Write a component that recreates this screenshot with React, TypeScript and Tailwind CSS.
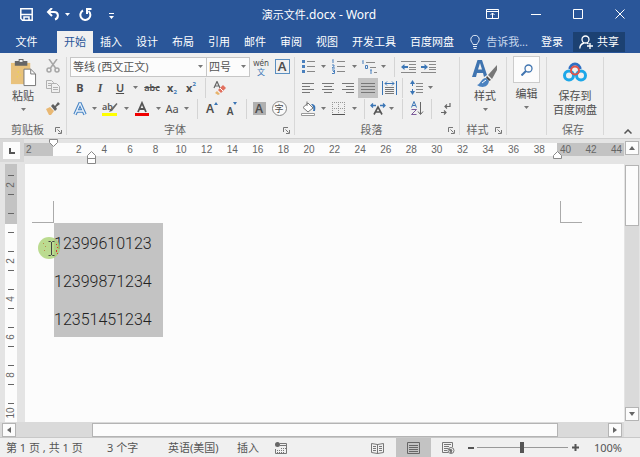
import React, { useState } from "react";
import clsx from "clsx";

const tabs = ["插入", "设计", "布局", "引用", "邮件", "审阅", "视图", "开发工具", "百度网盘"];
const rulerNumbers = [2, 4, 6, 8, 10, 12, 14, 16, 18, 20, 22, 24, 26, 28, 30, 32, 34, 36, 38];
const sideNumbers = ["", "2", "", "4", "", "6", "", "8", "", "10", ""];
const paragraphs = ["12399610123", "12399871234", "12351451234"];

const Caret = ({ className }: { className?: string }) => (
    <svg viewBox="0 0 5 3" className={clsx("h-[3px] w-[5px] shrink-0", className)}>
        <path d="M0 0h5L2.500 3z" fill="#777" />
    </svg>
);

type ToolProps = { label: string; className?: string; children?: React.ReactNode };

const Tool = ({ label, className = "w-5", children }: ToolProps) => (
    <button type="button" aria-label={label} className={clsx("flex h-5 shrink-0 items-center justify-center", className)}>
        {children}
    </button>
);

const More = ({ label, className = "w-2" }: ToolProps) => (
    <Tool label={label} className={className}>
        <Caret />
    </Tool>
);

const Divider = ({ className }: { className?: string }) => (
    <div className={clsx("h-5 w-px shrink-0 bg-[#d4d4d4]", className)} />
);

const Launcher = ({ label }: { label: string }) => (
    <button type="button" aria-label={label} className="shrink-0">
        <svg viewBox="0 0 7 7" className="size-[7px]" fill="none" stroke="#777">
            <path d="M.5 5V.5H5M2.500 2.500l3 3M6.500 3v3.500H3" />
        </svg>
    </button>
);

type GroupProps = { title?: string; launcher?: boolean; className?: string; children: React.ReactNode };

const Group = ({ title, launcher, className, children }: GroupProps) => (
    <section className={clsx("flex shrink-0 flex-col", className)}>
        <div className="h-[63px] shrink-0">{children}</div>
        <div className="flex h-[19px] shrink-0 items-center pt-[3px] pr-1">
            <span className="flex-1 text-center text-[#666]">{title}</span>
            {launcher && <Launcher label={`${title}设置`} />}
        </div>
    </section>
);

const GroupLine = () => <div className="mt-px h-[78px] w-px shrink-0 bg-[#d8d8d8]" />;

const Lines = ({ rows }: { rows: string }) => (
    <svg viewBox="0 0 14 12" className="h-3 w-[14px]" stroke="#777" fill="none">
        <path d={rows} />
    </svg>
);

const ClipboardGroup = () => (
    <Group title="剪贴板" launcher className="w-[66px]">
        <div className="flex">
            <button type="button" className="flex w-[46px] flex-col items-center pt-[3px]">
                <svg viewBox="0 0 28 30" className="h-[29px] w-[27px]">
                    <path d="M1 4h20v22H1z" fill="#e9c27c" />
                    <path d="M5 2h4V0h5v2h4v5H5z" fill="#666" />
                    <path d="M10 1h3v2h-3z" fill="#f0f0f0" />
                    <path d="M8 13h1v1H8zM10 16h1v1h-1zM7 18h1v1H7z" fill="#f5e618" />
                    <path d="M14.500 10.500h7l5 5v12h-12z" fill="#fff" stroke="#777" />
                    <path d="M21.500 10.500v5h5" fill="none" stroke="#777" />
                </svg>
                <span className="leading-4">粘贴</span>
                <Caret className="mt-1" />
            </button>
            <div className="flex flex-col">
                <Tool label="剪切" className="w-3.5">
                    <svg viewBox="0 0 14 14" className="size-3.5" fill="none" stroke="#a6a6a6" strokeWidth="1.500">
                        <path d="M3 0l6.500 9M11 0L4.500 9" />
                        <circle cx="3" cy="11" r="2" />
                        <circle cx="11" cy="11" r="2" />
                    </svg>
                </Tool>
                <Tool label="复制" className="w-3.5">
                    <svg viewBox="0 0 14 14" className="size-3.5" fill="#f0f0f0" stroke="#b0b0b0">
                        <path d="M.5 1.500h5l2 2v6h-7zM2 4.500h3M2 6.500h3" />
                        <path d="M5.500 4.500h5l3 3v6h-8zM7 8.500h5M7 10.500h5" />
                    </svg>
                </Tool>
                <Tool label="格式刷" className="mt-0.5 w-3.5">
                    <svg viewBox="0 0 14 13" className="h-[13px] w-3.5">
                        <path d="M0 7l4-2 4 4-3 4H3z" fill="#e9b873" />
                        <path d="M5 4l2-2 2 2 3-4 2 2-4 3 1 2-2 2z" fill="#5f5f5f" />
                    </svg>
                </Tool>
            </div>
        </div>
    </Group>
);

const FontGroup = () => (
    <Group title="字体" launcher className="w-[227px]">
        <div className="flex h-[21px] items-center pl-[3px]">
            <div className="relative">
                <select aria-label="字体" className="h-5 w-[137px] appearance-none border border-[#c6c6c6] bg-[#fcfcfc] pl-0.5 text-[11px] leading-4 text-[#555]">
                    <option>等线 (西文正文)</option>
                </select>
                <Caret className="pointer-events-none absolute top-2 right-1" />
            </div>
            <div className="relative -ml-px">
                <select aria-label="字号" className="h-5 w-11 appearance-none border border-[#c6c6c6] bg-[#fcfcfc] pl-0.5 text-[11px] leading-4 text-[#555]">
                    <option>四号</option>
                </select>
                <Caret className="pointer-events-none absolute top-2 right-1" />
            </div>
            <Tool label="拼音指南" className="w-[22px] flex-col">
                <span className="text-[8px] leading-[9px]">wén</span>
                <span className="text-[8px] leading-[9px] text-[#3a75b5]">文</span>
            </Tool>
            <Tool label="字符边框">
                <span className="flex size-[15px] items-center justify-center border border-[#5b8fc0] text-[13px] leading-none font-semibold">A</span>
            </Tool>
        </div>
        <div className="flex h-[21px] items-center pl-[3px] text-[11px]">
            <Tool label="加粗"><span className="font-bold">B</span></Tool>
            <Tool label="倾斜"><span className="font-['Liberation_Serif'] text-[12px] font-bold italic">I</span></Tool>
            <Tool label="下划线"><span className="font-semibold underline">U</span></Tool>
            <More label="下划线样式" className="w-[11px]" />
            <Tool label="删除线" className="w-[22px]"><span className="text-[9px] font-semibold line-through">abc</span></Tool>
            <Tool label="下标" className="w-[18px]">
                <span className="font-bold">x</span><span className="pt-2 text-[6px] font-bold text-[#3a75b5]">2</span>
            </Tool>
            <Tool label="上标">
                <span className="font-bold">x</span><span className="pb-2 text-[6px] font-bold text-[#3a75b5]">2</span>
            </Tool>
            <Divider className="mx-1" />
            <Tool label="清除格式">
                <svg viewBox="0 0 14 14" className="size-3.5">
                    <path d="M1 7l3-6.500L7 7M2 5h4" fill="none" stroke="#666" strokeWidth="1.200" />
                    <path d="M5 9l5-5 3 3-5 5z" fill="#e2705f" />
                    <path d="M4 10l3 3-2 1-3-2z" fill="#e7b36c" />
                    <path d="M7 7l3 3" stroke="#fff" />
                </svg>
            </Tool>
        </div>
        <div className="flex h-[21px] items-center pl-[3px]">
            <Tool label="文本效果">
                <svg viewBox="0 0 14 14" className="size-3.5" fill="none">
                    <path d="M2 12.500L7 1.500l5 11M4 9h6" stroke="#4a86c5" strokeWidth="3.500" />
                    <path d="M2 12.500L7 1.500l5 11M4 9h6" stroke="#e9f1fa" strokeWidth="1.300" />
                </svg>
            </Tool>
            <More label="更多文本效果" />
            <Tool label="突出显示" className="w-6">
                <svg viewBox="0 0 16 16" className="size-4">
                    <text x="0" y="9" fontSize="9" fontWeight="600" fill="#555">ab</text>
                    <path d="M14.500 2L8 9l-1 2 3-1 5.500-7z" fill="#666" />
                    <path d="M0 12h15v3H0z" fill="#ffff00" />
                </svg>
            </Tool>
            <More label="突出显示颜色" />
            <Tool label="字体颜色" className="w-6">
                <svg viewBox="0 0 14 16" className="h-4 w-3.5">
                    <path d="M3 11L7 2l4 9M4.500 8h5" fill="none" stroke="#555" strokeWidth="1.800" />
                    <path d="M0 12h14v3H0z" fill="#f00000" />
                </svg>
            </Tool>
            <More label="更多字体颜色" />
            <Tool label="更改大小写"><span className="text-[11px]">Aa</span></Tool>
            <More label="大小写选项" />
            <Divider className="mr-1 ml-[7px]" />
            <Tool label="增大字号">
                <span className="text-[12px] font-semibold">A</span>
                <svg viewBox="0 0 4 14" className="h-3.5 w-1"><path d="M0 3l2-3 2 3z" fill="#3a75b5" /></svg>
            </Tool>
            <Tool label="减小字号">
                <span className="pt-1 text-[10px] font-semibold">A</span>
                <svg viewBox="0 0 4 14" className="h-3.5 w-1"><path d="M0 0h4L2 3z" fill="#3a75b5" /></svg>
            </Tool>
            <Divider className="mr-0.5 ml-1" />
            <Tool label="字符底纹">
                <span className="flex size-[13px] items-center justify-center bg-[#b0b0b0] text-[12px] leading-none font-semibold">A</span>
            </Tool>
            <Tool label="带圈字符">
                <span className="flex size-[15px] items-center justify-center rounded-full border border-[#888] bg-[#fafafa] text-[9px] leading-none">字</span>
            </Tool>
        </div>
    </Group>
);

const ParagraphGroup = () => (
    <Group title="段落" launcher className="w-[164px]">
        <div className="flex h-[21px] items-center pl-0.5">
            <Tool label="项目符号" className="w-[22px]">
                <svg viewBox="0 0 13 13" className="size-[13px]">
                    <path d="M0 0h3v3H0zM0 5h3v3H0zM0 10h3v3H0z" fill="#4a80bd" />
                    <path d="M5 1.500h8M5 6.500h8M5 11.500h8" stroke="#888" />
                </svg>
            </Tool>
            <More label="项目符号库" />
            <Tool label="编号" className="w-[22px]">
                <svg viewBox="0 0 13 15" className="h-[15px] w-[13px]">
                    <path d="M0 1.500l1-1V4M0 6h2v1.500L0 9h3M0 11h2.500v3.500H0M1 12.500h1" fill="none" stroke="#4a80bd" />
                    <path d="M5 2.500h8M5 7.500h8M5 12.500h8" stroke="#888" />
                </svg>
            </Tool>
            <More label="编号库" className="w-2.5" />
            <Tool label="多级列表">
                <svg viewBox="0 0 15 14" className="h-3.5 w-[15px]">
                    <path d="M0 1.500l1-1V4M3.500 5.500h2v3h-2zM9 10v4M8 10h2" fill="none" stroke="#4a80bd" />
                    <path d="M4 2.500h9M8 7.500h6M12 12.500h3" stroke="#888" />
                </svg>
            </Tool>
            <More label="多级列表库" />
            <Divider className="mr-[3px] ml-[7px]" />
            <Tool label="减少缩进量">
                <svg viewBox="0 0 15 12" className="h-3 w-[15px]">
                    <path d="M0 .5h15M8 3.500h7M8 6.500h7M8 8.500h7M0 11.500h15" stroke="#888" />
                    <path d="M0 6l3.500-3v2H7v2H3.500v2z" fill="#3a75b5" />
                </svg>
            </Tool>
            <Tool label="增加缩进量">
                <svg viewBox="0 0 15 12" className="h-3 w-[15px]">
                    <path d="M0 .5h15M8 3.500h7M8 6.500h7M8 8.500h7M0 11.500h15" stroke="#888" />
                    <path d="M7 6L3.500 3v2H0v2h3.500v2z" fill="#3a75b5" />
                </svg>
            </Tool>
        </div>
        <div className="flex h-[21px] items-center pl-0.5">
            <Tool label="左对齐" className="w-[21px]"><Lines rows="M1 1.500h12M1 4.500h8M1 7.500h12M1 10.500h8" /></Tool>
            <Tool label="居中"><Lines rows="M1 1.500h12M3 4.500h8M1 7.500h12M3 10.500h8" /></Tool>
            <Tool label="右对齐"><Lines rows="M1 1.500h12M5 4.500h8M1 7.500h12M5 10.500h8" /></Tool>
            <Tool label="两端对齐" className="w-5 bg-[#c3c3c3]"><Lines rows="M0 1.500h14M0 4.500h14M0 7.500h14M0 10.500h14" /></Tool>
            <Tool label="分散对齐" className="w-[22px]">
                <svg viewBox="0 0 15 14" className="h-3.5 w-[15px]" fill="none">
                    <path d="M.5 0v14M14.500 0v14M3 2.500h9M5 .5l-2 2 2 2M10 .5l2 2-2 2" stroke="#3a75b5" />
                    <path d="M3 6.500h9M3 8.500h9M3 10.500h9M3 12.500h9" stroke="#777" />
                </svg>
            </Tool>
            <Divider className="mr-[3px] ml-0.5" />
            <Tool label="行距">
                <svg viewBox="0 0 13 15" className="h-[15px] w-[13px]">
                    <path d="M0 4l2.500-4L5 4H3v2H2V4zM0 11h2V9h1v2h2l-2.500 4z" fill="#3a75b5" />
                    <path d="M6 3.500h7M6 6.500h7M6 9.500h7M6 12.500h7" stroke="#888" />
                </svg>
            </Tool>
            <More label="行距选项" />
        </div>
        <div className="flex h-[21px] items-center pl-0.5">
            <Tool label="底纹" className="w-[22px]">
                <svg viewBox="0 0 15 15" className="size-[15px]">
                    <path d="M2 6.500L7 2l5 5-5 4zM6 5V.5" fill="#fff" stroke="#777" />
                    <path d="M10 3c4 0 5 2 4 7h-2c1-3 0-5-2-7z" fill="#3a75b5" />
                    <path d="M.5 12.500h13v2H.5z" fill="#fff" stroke="#999" />
                </svg>
            </Tool>
            <More label="底纹颜色" />
            <Tool label="边框" className="w-[22px]">
                <svg viewBox="0 0 13 13" className="size-[13px]" fill="none" stroke="#999">
                    <path d="M.5 0v12M6.500 0v12M12.500 0v12M0 .5h13M0 6.500h13" strokeDasharray="1 1" />
                    <path d="M0 12.500h13" stroke="#555" />
                </svg>
            </Tool>
            <More label="边框样式" className="w-2.5" />
            <Divider className="mr-[3px] ml-[5px]" />
            <Tool label="中文版式">
                <svg viewBox="0 0 16 12" className="h-3 w-4" fill="none">
                    <path d="M4 11.500L8 4l4 7.500M5.500 9h5" stroke="#555" strokeWidth="1.600" />
                    <path d="M6 2.500H1M3 .5l-2 2 2 2M10 2.500h5M13 .5l2 2-2 2" stroke="#3a75b5" strokeWidth="1.300" />
                </svg>
            </Tool>
            <More label="版式选项" className="w-1.5" />
            <Divider className="mr-[3px] ml-2" />
            <Tool label="排序" className="w-[22px]">
                <svg viewBox="0 0 13 15" className="h-[15px] w-[13px]" fill="none">
                    <path d="M.5 6.500L3 .5l2.500 6M1.500 4.500h3" stroke="#3a75b5" />
                    <path d="M.5 8.500h5l-5 5h5" stroke="#7d5a9a" />
                    <path d="M9.500 1v12M7 10.500l2.500 3 2.500-3" stroke="#666" />
                </svg>
            </Tool>
            <Divider className="mr-1 ml-[3px]" />
            <Tool label="显示编辑标记">
                <svg viewBox="0 0 10 12" className="h-3 w-2.5" fill="none" stroke="#666" strokeWidth="1.200">
                    <path d="M9 0v3.500H4M6 1.500l-2 2 2 2M0 9.500h5M3 7.500l2 2-2 2" />
                </svg>
            </Tool>
        </div>
    </Group>
);

const Ribbon = () => (
    <div className="flex h-[86px] shrink-0 border-b border-[#d0d0d0] bg-[#f0f0f0] pt-[3px] text-[#4d4d4d]">
        <ClipboardGroup />
        <GroupLine />
        <FontGroup />
        <GroupLine />
        <ParagraphGroup />
        <GroupLine />
        <Group title="样式" launcher className="w-[46px]">
            <button type="button" className="flex w-full flex-col items-center pt-[3px] pl-1">
                <svg viewBox="0 0 26 29" className="h-[29px] w-[26px]">
                    <path d="M0 18L5.500 1h4.500l5 15-3 2-1-4H5l-1 4zM6 10.500h4L8 4z" fill="#3f74b0" />
                    <path d="M25 6l-9 10 4 4 5-9z" fill="#777" />
                    <path d="M15 17l4 4-2 1-3-3z" fill="#4a4a4a" />
                    <path d="M14 19c-5 0-5 6-9 7 4 3 11 3 12-4z" fill="#4a82c0" />
                    <path d="M10 24l4-3" stroke="#fff" />
                </svg>
                <span className="leading-4">样式</span>
                <Caret className="mt-1" />
            </button>
        </Group>
        <GroupLine />
        <Group className="w-[39px]">
            <button type="button" className="flex w-full flex-col items-center">
                <span className="flex h-[27px] w-[27px] items-center justify-center border border-[#ccc] bg-[#fcfcfc]">
                    <svg viewBox="0 0 12 12" className="size-3" fill="none" stroke="#3f74b0">
                        <circle cx="7.500" cy="4.500" r="3.500" strokeWidth="1.300" />
                        <path d="M5 7l-4.500 4.500" strokeWidth="2" />
                    </svg>
                </span>
                <span className="mt-[3px] leading-4">编辑</span>
                <Caret className="mt-1" />
            </button>
        </Group>
        <GroupLine />
        <Group title="保存" className="w-[56px]">
            <button type="button" className="flex w-full flex-col items-center pt-[5px]">
                <svg viewBox="0 0 26 22" className="h-[22px] w-[26px]" fill="none" strokeWidth="3">
                    <path d="M8 8a5 5 0 0 1 10 0" stroke="#2f6fc4" />
                    <circle cx="7" cy="14.500" r="4.500" stroke="#1da7e8" />
                    <circle cx="19" cy="14.500" r="4.500" stroke="#1da7e8" />
                    <circle cx="13" cy="9.500" r="4" stroke="#e25248" strokeWidth="2" />
                </svg>
                <span className="mt-1.5 leading-[14px] whitespace-nowrap">保存到<br />百度网盘</span>
            </button>
        </Group>
        <GroupLine />
        <div className="flex flex-1 items-end justify-end pr-2 pb-1">
            <button type="button" aria-label="折叠功能区">
                <svg viewBox="0 0 8 5" className="h-[5px] w-2" fill="none" stroke="#555" strokeWidth="1.500">
                    <path d="M.5 4.500L4 1l3.500 3.500" />
                </svg>
            </button>
        </div>
    </div>
);

const TitleBar = () => (
    <header className="flex h-7 shrink-0 items-center text-white">
        <div className="flex w-[160px] items-center pl-5">
            <button type="button" aria-label="保存">
                <svg viewBox="0 0 13 13" className="size-[13px]" fill="none" stroke="#fff" strokeWidth="1.500">
                    <path d="M.8.8h11.400v11.400H2.500L.8 10.500zM1 6.500h11M4 12V9h5v3" />
                </svg>
            </button>
            <button type="button" aria-label="撤消" className="ml-[13px]">
                <svg viewBox="0 0 14 13" className="h-[13px] w-3.5" fill="none" stroke="#fff" strokeWidth="2">
                    <path d="M6 0L2 4l4 4M2 4h6c5 0 5 6 1 7.500" />
                </svg>
            </button>
            <button type="button" aria-label="撤消列表" className="ml-[5px]">
                <svg viewBox="0 0 5 3" className="h-[3px] w-[5px]"><path d="M0 0h5L2.500 3z" fill="#fff" /></svg>
            </button>
            <button type="button" aria-label="重复" className="ml-[9px]">
                <svg viewBox="0 0 13 13" className="size-[13px]" fill="none" stroke="#fff" strokeWidth="2">
                    <path d="M4 2.500a5 5 0 1 0 5.500.5M12.500 1H8v5" />
                </svg>
            </button>
            <button type="button" aria-label="自定义快速访问工具栏" className="ml-[17px] pt-1">
                <svg viewBox="0 0 5 6" className="h-1.5 w-[5px]"><path d="M0 0h5v1H0zM0 3h5L2.500 6z" fill="#fff" /></svg>
            </button>
        </div>
        <h1 className="flex-1 pt-0.5 text-center text-[11px] leading-4">演示文件<span className="text-[12px]">.docx - Word</span></h1>
        <div className="flex w-[162px] items-center justify-between pr-[15px] pl-2">
            <button type="button" aria-label="功能区显示选项">
                <svg viewBox="0 0 13 10" className="h-2.5 w-[13px]" fill="none" stroke="#fff">
                    <path d="M.5.5h12v9H.5zM.5 2.500h12M6.500 9V4M4.500 6l2-2 2 2" />
                </svg>
            </button>
            <button type="button" aria-label="最小化">
                <svg viewBox="0 0 10 10" className="size-2.5" stroke="#fff"><path d="M0 5.500h10" /></svg>
            </button>
            <button type="button" aria-label="最大化">
                <svg viewBox="0 0 10 10" className="size-2.5" fill="none" stroke="#fff"><path d="M.5.5h9v9h-9z" /></svg>
            </button>
            <button type="button" aria-label="关闭">
                <svg viewBox="0 0 10 10" className="size-2.5" stroke="#fff"><path d="M.5.5l9 9M9.500.5l-9 9" /></svg>
            </button>
        </div>
    </header>
);

const TabBar = () => (
    <nav className="flex h-[25px] shrink-0 items-end text-white">
        <button type="button" className="h-[22px] w-[57px] pr-1">文件</button>
        <button type="button" className="h-[22px] w-9 bg-[#f0f0f0] text-[#2a5699]">开始</button>
        {tabs.map((tab) => (
            <button key={tab} type="button" className="h-[22px] px-[7px] whitespace-nowrap">{tab}</button>
        ))}
        <div className="flex h-[22px] flex-1 items-center justify-end">
            <button type="button" className="flex items-center gap-1.5 whitespace-nowrap text-[#c5d5ea]">
                <svg viewBox="0 0 10 14" className="h-3.5 w-2.5" fill="none" stroke="#e4ecf6">
                    <path d="M3 9.500C3 8 .8 7 .8 4.500a4.200 4.200 0 0 1 8.400 0C9.200 7 7 8 7 9.500zM3 11.500h4M3.500 13.500h3" />
                </svg>
                告诉我...
            </button>
            <button type="button" className="ml-[13px]">登录</button>
            <button type="button" className="mr-[15px] ml-2.5 flex h-5 w-[52px] items-center justify-center gap-1 bg-[#1c4172]">
                <svg viewBox="0 0 14 14" className="size-3.5" fill="none" stroke="#fff" strokeWidth="1.300">
                    <circle cx="6.500" cy="4.500" r="3.500" />
                    <path d="M.8 13.500C1 10 3 8.500 5 8M8 8l1.500 1M11 8v6M8 11h6" />
                </svg>
                共享
            </button>
        </div>
    </nav>
);

const HorizontalRuler = () => (
    <div className="flex h-[25px] shrink-0 bg-[#e4e4e4] font-['Liberation_Sans'] text-[10px] leading-[13px] text-[#666]">
        <div className="h-[23px] w-6 bg-[#d8d8d8] pt-[3px] pl-[3px]">
            <button type="button" aria-label="制表符" className="flex size-[17px] items-center justify-center bg-[#fcfcfc]">
                <svg viewBox="0 0 6 6" className="size-1.5" fill="none" stroke="#555" strokeWidth="2"><path d="M1 0v5h5" /></svg>
            </button>
        </div>
        <div className="mt-1 h-[13px] w-[29px] bg-[#c3c3c3] pl-0.5">2</div>
        <div className="relative mt-1 flex h-[13px] flex-1 bg-[#fcfcfc] pr-[5px] pl-[13px]">
            {rulerNumbers.map((n) => (
                <span key={n} className="flex-1 text-center">{n}</span>
            ))}
            <svg viewBox="0 0 9 8" className="absolute -top-1 -left-1 h-2 w-[9px]" fill="#fff" stroke="#888">
                <path d="M.5.5h8v3l-4 4-4-4z" />
            </svg>
            <svg viewBox="0 0 9 13" className="absolute top-2 left-[34px] h-[13px] w-[9px]" fill="#fff" stroke="#888">
                <path d="M.5 12.500v-8l4-4 4 4v8zM.5 7.500h8" />
            </svg>
            <svg viewBox="0 0 9 8" className="absolute top-2 -right-[5px] z-10 h-2 w-[9px]" fill="#fff" stroke="#888">
                <path d="M.5 7.500v-3l4-4 4 4v3z" />
            </svg>
        </div>
        <div className="mt-1 flex h-[13px] w-[67px] justify-between bg-[#c3c3c3] pr-0.5 pl-[3px]">
            <span>40</span>
            <span>42</span>
            <span>44</span>
        </div>
    </div>
);

const SideCell = ({ value }: { value: string }) => (
    <div className="flex h-[19px] w-full shrink-0 flex-col items-center">
        <span className="h-px w-1.5 bg-[#666]" />
        <span className="flex flex-1 -rotate-90 items-center">{value}</span>
    </div>
);

const VerticalRuler = () => (
    <div className="flex w-[25px] shrink-0 flex-col overflow-hidden bg-[#e4e4e4] pl-[5px] font-['Liberation_Sans'] text-[10px] leading-none text-[#666]">
        <div className="h-[60px] w-3 shrink-0 overflow-hidden bg-[#c3c3c3] pt-[11px]">
            <SideCell value="2" />
            <SideCell value="" />
            <SideCell value="" />
        </div>
        <div className="min-h-0 w-3 flex-1 overflow-hidden bg-[#fcfcfc] pt-2">
            {sideNumbers.map((n, i) => (
                <SideCell key={i} value={n} />
            ))}
        </div>
    </div>
);

const Page = () => (
    <main className="min-w-0 flex-1 overflow-hidden bg-[#fcfcfc] pt-[37px] pl-[7px]">
        <div className="flex justify-between pr-[42px]">
            <div className="size-[22px] border-r border-b border-[#aaa]" />
            <div className="size-[22px] border-b border-l border-[#aaa]" />
        </div>
        <div className="relative ml-[22px] h-[114px] w-fit bg-[#c3c3c3] pt-0.5 pr-[11px] font-['Roboto'] text-[16px] leading-[38px] font-light text-[#222]">
            {paragraphs.map((text) => (
                <p key={text}>{text}</p>
            ))}
            <svg viewBox="0 0 22 22" className="absolute top-3.5 -left-4 size-[22px]">
                <circle cx="11" cy="11" r="11" fill="#a5d06c" fillOpacity=".75" />
                <path d="M10.500 4.500h2l1 1 1-1h2M13.500 5v13M10.500 18.500h2l1-1 1 1h2" fill="none" stroke="#444" />
                <path d="M18 7h1v1h-1zM19 10h1v1h-1zM18 13h1v2h-1zM19 16h1v1h-1z" fill="#d33" />
                <path d="M5 6h1v1H5zM7 9h1v1H7zM6 13h1v1H6z" fill="#b98a4a" />
            </svg>
        </div>
    </main>
);

type ArrowProps = { label: string; path: string };

const ScrollButton = ({ label, path }: ArrowProps) => (
    <button type="button" aria-label={label} className="flex size-3.5 shrink-0 items-center justify-center border border-[#b4b4b4] bg-[#fcfcfc]">
        <svg viewBox="0 0 6 6" className="size-1.5"><path d={path} fill="#666" /></svg>
    </button>
);

const StatusBar = () => {
    const [zoom, setZoom] = useState(50)

    return (
        <footer className="flex h-5 shrink-0 items-center border-t border-[#c8c8c8] bg-[#f0f0f0] text-[#555]">
            <div className="flex flex-1 items-center whitespace-nowrap">
                <span className="w-[107px] pl-1.5">第 1 页 , 共 1 页</span>
                <span className="w-[61px]">3 个字</span>
                <button type="button" className="w-[69px] text-left">英语(美国)</button>
                <button type="button">插入</button>
                <button type="button" aria-label="录制宏" className="ml-4">
                    <svg viewBox="0 0 12 12" className="size-3" fill="none" stroke="#777">
                        <path d="M5 1.500h6.500v10H.5V7M5 3.500h6" />
                        <path d="M2 8.500h8M2 10.500h8M6 6.500h5" strokeDasharray="1 1" />
                        <circle cx="2.500" cy="2.500" r="2.500" fill="#666" stroke="none" />
                    </svg>
                </button>
            </div>
            <Tool label="阅读视图" className="w-9">
                <svg viewBox="0 0 13 12" className="h-3 w-[13px]" fill="none" stroke="#777">
                    <path d="M6.500 2v10M.5 1.500l6 1 6-1v9l-6 1-6-1zM2 4.500h3M2 6.500h3M2 8.500h3M8 4.500h3M8 6.500h3M8 8.500h3" />
                </svg>
            </Tool>
            <Tool label="页面视图" className="w-[35px] bg-[#c3c3c3]">
                <svg viewBox="0 0 13 12" className="h-3 w-[13px]" fill="none" stroke="#666">
                    <path d="M.5.5h12v11H.5zM2 3.500h9M2 5.500h9M2 7.500h9M2 9.500h9" />
                </svg>
            </Tool>
            <Tool label="Web 版式视图" className="w-[35px]">
                <svg viewBox="0 0 13 12" className="h-3 w-[13px]" fill="none" stroke="#777">
                    <path d="M6 10.500H.5V.5h10V5M2 2.500h7M2 4.500h5M2 6.500h4M2 8.500h3" />
                    <circle cx="9" cy="8.500" r="3" />
                    <path d="M7 7l3 1-1 3z" fill="#666" />
                </svg>
            </Tool>
            <button type="button" aria-label="缩小" className="ml-0.5 flex h-4 w-[9px] items-center">
                <svg viewBox="0 0 6 6" className="size-1.5" stroke="#555" strokeWidth="2"><path d="M0 3h6" /></svg>
            </button>
            <input
                type="range"
                aria-label="显示比例"
                value={zoom}
                onChange={(e) => setZoom(Number(e.target.value))}
                className="h-4 w-[91px] appearance-none bg-transparent [&::-webkit-slider-runnable-track]:h-px [&::-webkit-slider-runnable-track]:bg-[#999] [&::-webkit-slider-thumb]:-mt-[5px] [&::-webkit-slider-thumb]:h-[11px] [&::-webkit-slider-thumb]:w-1 [&::-webkit-slider-thumb]:appearance-none [&::-webkit-slider-thumb]:bg-[#555]"
            />
            <button type="button" aria-label="放大" className="ml-1 flex h-4 w-[7px] items-center">
                <svg viewBox="0 0 7 7" className="size-[7px]" stroke="#555" strokeWidth="2"><path d="M0 3.500h7M3.500 0v7" /></svg>
            </button>
            <button type="button" className="mr-[18px] ml-[15px]">100%</button>
        </footer>
    );
};

const App = () => {
    return (
        <div className="flex h-screen min-h-[300px] flex-col overflow-hidden bg-[#2a5699] font-['Noto_Sans','Noto_Sans_CJK_SC',sans-serif] text-[11px] leading-4">
            <TitleBar />
            <TabBar />
            <Ribbon />
            <div className="flex min-h-0 flex-1 bg-[#e4e4e4]">
                <div className="flex min-w-0 flex-1 flex-col">
                    <HorizontalRuler />
                    <div className="flex min-h-0 flex-1">
                        <VerticalRuler />
                        <Page />
                    </div>
                    <div className="flex h-[15px] shrink-0 items-center bg-[#dadada] pl-0.5">
                        <ScrollButton label="向左滚动" path="M5 0v6L1 3z" />
                        <div className="ml-[76px] h-3.5 flex-1 border border-[#b4b4b4] bg-[#fcfcfc]" />
                        <div className="w-[50px]" />
                        <ScrollButton label="向右滚动" path="M1 0v6l4-3z" />
                        <div className="w-0.5" />
                    </div>
                </div>
                <div className="flex w-4 shrink-0 flex-col items-center pt-0.5 pb-4">
                    <ScrollButton label="向上滚动" path="M0 5h6L3 1z" />
                    <div className="mt-2.5 h-[61px] w-3.5 border border-[#b4b4b4] bg-[#fcfcfc]" />
                    <div className="w-3.5 flex-1 bg-[#dadada]" />
                    <ScrollButton label="向下滚动" path="M0 1h6L3 5z" />
                </div>
            </div>
            <StatusBar />
        </div>
    );
};

export default App;
